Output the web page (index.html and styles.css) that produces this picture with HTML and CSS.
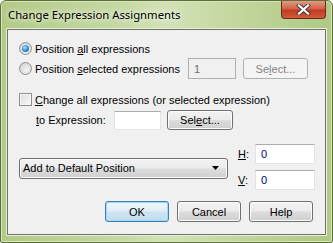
FILE: index.html
```html
<!DOCTYPE html>
<html>
<head>
<meta charset="utf-8">
<link rel="stylesheet" href="styles.css">
</head>
<body>
<div class="window">
  <div class="titlebar">
    <span class="title">Change Expression Assignments</span>
    <div class="close">
      <svg width="17" height="11" viewBox="0 0 17 11">
        <path d="M4 1.5 L13 9.5 M13 1.5 L4 9.5" stroke="#3a3a3a" stroke-width="4" stroke-linecap="square"/>
        <path d="M4 1.5 L13 9.5 M13 1.5 L4 9.5" stroke="#ffffff" stroke-width="2.2" stroke-linecap="square"/>
      </svg>
    </div>
  </div>
  <div class="client">
    <div class="row r1">
      <span class="radio checked"></span>
      <span class="label">Position <u>a</u>ll expressions</span>
    </div>
    <div class="row r2">
      <span class="radio"></span>
      <span class="label w-sel">Position <u>s</u>elected expressions</span>
      <span class="edit disabled w-num">1</span>
      <span class="btn disabled w-sel1">Se<u>l</u>ect...</span>
    </div>
    <div class="row r3">
      <span class="check"></span>
      <span class="label"><u>C</u>hange all expressions (or selected expression)</span>
    </div>
    <div class="row r4">
      <span class="label to"><u>t</u>o Expression:</span>
      <span class="edit w-expr"></span>
      <span class="btn w-sel2">Sel<u>e</u>ct...</span>
    </div>
    <div class="row r5">
      <div class="combo">
        <span>Add to Default Position</span>
        <svg width="8" height="4" viewBox="0 0 8 4"><path d="M0 0 H7 L3.5 4 Z" fill="#000"/></svg>
      </div>
      <div class="hv">
        <div class="hvrow"><span class="hvlabel"><u>H</u>:</span><span class="edit w-hv">0</span></div>
        <div class="hvrow"><span class="hvlabel"><u>V</u>:</span><span class="edit w-hv">0</span></div>
      </div>
    </div>
    <div class="row r6">
      <span class="btn default w-bot">OK</span>
      <span class="btn w-bot">Cancel</span>
      <span class="btn w-bot">Help</span>
    </div>
  </div>
</div>
</body>
</html>
```
FILE: styles.css
```css
html, body { margin: 0; padding: 0; background: #ffffff; }
body { font-family: "Liberation Sans", Arial, sans-serif; font-size: 11px; color: #000; }
u { text-decoration: underline; text-underline-offset: 1px; }

.window {
  width: 333px; height: 243px; box-sizing: border-box;
  border: 1px solid #5a7036;
  border-radius: 6px 6px 2px 2px;
  background: linear-gradient(90deg, #b2ca86 0%, #c4d8a2 35%, #d2e2b6 50%, #bfd499 75%, #b0c985 100%);
  padding: 0 6px 7px 6px;
  display: flex; flex-direction: column;
  box-shadow: inset 0 0 0 1px #d8e6c0;
}
.titlebar {
  height: 28px; display: flex; align-items: flex-start; justify-content: space-between;
}
.title {
  font-family: "Noto Sans", "Open Sans", sans-serif; font-size: 11.3px;
  margin-top: 6px; margin-left: 1px; color: #000;
  text-shadow: 0 0 8px #ffffff, 0 0 4px #f2f6e8;
}
.close {
  width: 45px; height: 18px; margin-right: 0px; box-sizing: border-box;
  border: 1px solid #6b2a1c; border-top: none;
  border-radius: 0 0 4px 4px;
  background: linear-gradient(#e49a84 0%, #d2624a 45%, #c23a1e 55%, #d35a3c 100%);
  display: flex; align-items: center; justify-content: center;
}
.client {
  flex: 1;
  background: #f0f0f0;
  border: 1px solid #6c7268;
  box-shadow: 0 0 0 1px #e8efdc;
  display: flex; flex-direction: column;
  padding-left: 11px;
}
.row { display: flex; align-items: center; }
.r1 { margin-top: 12px; height: 13px; }
.r2 { margin-top: 3px; height: 21px; }
.r3 { margin-top: 14px; height: 13px; }
.r4 { margin-top: 4px; height: 20px; }
.r5 { margin-top: 14px; height: 46px; align-items: stretch; }
.r6 { margin-top: 11px; height: 21px; padding-left: 86px; gap: 8px; }

.label { margin-left: 3px; white-space: nowrap; }
.w-sel { width: 153px; }
.to { margin-left: 17px; width: 78px; }

.radio {
  width: 13px; height: 13px; box-sizing: border-box; border-radius: 50%;
  border: 1px solid #8f8f8f;
  background: radial-gradient(circle at 60% 65%, #f4f4f4 0%, #dcdcdc 60%, #cfcfcf 100%);
  display: inline-block; position: relative;
}
.radio.checked::after {
  content: ""; position: absolute; left: 2px; top: 2px; width: 7px; height: 7px; border-radius: 50%;
  background: radial-gradient(circle at 40% 35%, #a6e1fb 0%, #2a8fd6 55%, #0d4f8c 100%);
}
.check {
  width: 13px; height: 13px; box-sizing: border-box; border: 1px solid #8f8f8f;
  background: linear-gradient(135deg, #dcdcdc, #fafafa);
  box-shadow: inset 0 0 0 1px #f4f4f4;
}

.edit {
  box-sizing: border-box; background: #fff;
  border: 1px solid #e2e3ea; border-top-color: #abadb3;
  display: flex; align-items: center; padding-left: 5px;
  font-family: "Liberation Sans", Arial, sans-serif; color: #000;
}
.edit.disabled { background: #f0f0f0; border-color: #afafaf; color: #6d6d6d; }
.w-num { width: 48px; height: 21px; }
.w-expr { width: 47px; height: 19px; }
.w-hv { width: 60px; height: 20px; color: #000080; }

.btn {
  box-sizing: border-box; border: 1px solid #707070; border-radius: 3px;
  background: linear-gradient(#f2f2f2 0%, #ebebeb 49%, #dddddd 51%, #cfcfcf 100%);
  box-shadow: inset 0 0 0 1px #fbfbfb;
  display: flex; align-items: center; justify-content: center;
  height: 21px;
}
.btn.disabled { border-color: #adb2b5; background: #f4f4f4; color: #838383; box-shadow: none; }
.btn.default { border-color: #3c7fb1; background: linear-gradient(#eef6fb 0%, #e0eef8 49%, #cfe4f2 51%, #c1dcef 100%); box-shadow: inset 0 0 0 1px #9fd8f8; }
.w-sel1 { width: 65px; margin-left: 7px; }
.w-sel2 { width: 66px; margin-left: 6px; height: 20px; }
.w-bot { width: 64px; }

.combo {
  width: 209px; height: 21px; box-sizing: border-box; align-self: center; margin-top: 2px;
  border: 1px solid #707070; border-radius: 3px;
  background: linear-gradient(#f2f2f2 0%, #ebebeb 49%, #dddddd 51%, #cfcfcf 100%);
  box-shadow: inset 0 0 0 1px #fbfbfb;
  display: flex; align-items: center; justify-content: space-between;
  padding: 0 7px 0 3px;
}
.hv { display: flex; flex-direction: column; justify-content: space-between; margin-left: 10px; }
.hvrow { display: flex; align-items: center; }
.hvlabel { width: 17px; }
```
